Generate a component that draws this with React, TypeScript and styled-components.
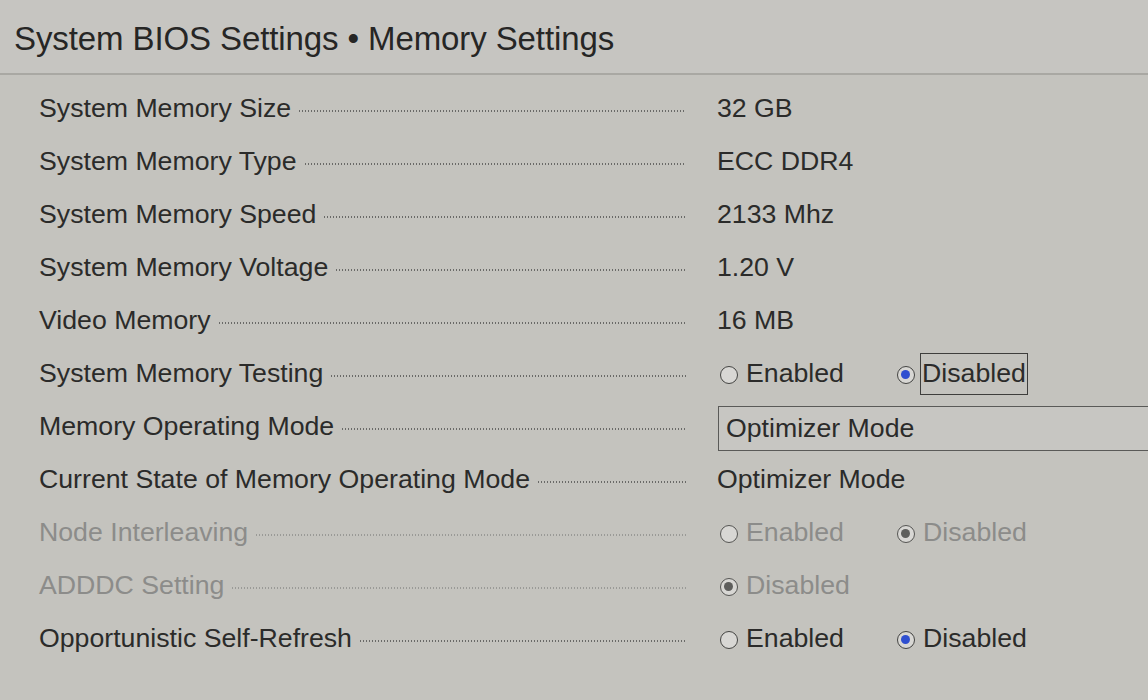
import * as React from 'react'
import styled, { createGlobalStyle, css } from 'styled-components'

type Option = { label: string; checked: boolean; focused?: boolean }

type Setting = {
  name: string
  disabled?: boolean
  text?: string
  select?: string
  options?: Option[]
}

const settings: Setting[] = [
  { name: 'System Memory Size', text: '32 GB' },
  { name: 'System Memory Type', text: 'ECC DDR4' },
  { name: 'System Memory Speed', text: '2133 Mhz' },
  { name: 'System Memory Voltage', text: '1.20 V' },
  { name: 'Video Memory', text: '16 MB' },
  {
    name: 'System Memory Testing',
    options: [
      { label: 'Enabled', checked: false },
      { label: 'Disabled', checked: true, focused: true },
    ],
  },
  { name: 'Memory Operating Mode', select: 'Optimizer Mode' },
  { name: 'Current State of Memory Operating Mode', text: 'Optimizer Mode' },
  {
    name: 'Node Interleaving',
    disabled: true,
    options: [
      { label: 'Enabled', checked: false },
      { label: 'Disabled', checked: true },
    ],
  },
  {
    name: 'ADDDC Setting',
    disabled: true,
    options: [{ label: 'Disabled', checked: true }],
  },
  {
    name: 'Opportunistic Self-Refresh',
    options: [
      { label: 'Enabled', checked: false },
      { label: 'Disabled', checked: true },
    ],
  },
]

const App: React.FC = () => (
  <>
    <GlobalStyle />
    <Screen>
      <Header>
        <Title>System BIOS Settings • Memory Settings</Title>
      </Header>
      <List>
        {settings.map((s) => (
          <Row key={s.name}>
            <LabelCell>
              <Label $disabled={s.disabled}>{s.name}</Label>
              <Leader $disabled={s.disabled} />
            </LabelCell>
            <ValueCell>
              {s.text && <Value>{s.text}</Value>}
              {s.select && <Select>{s.select}</Select>}
              {s.options &&
                s.options.map((o) => (
                  <RadioOption key={o.label}>
                    <RadioCircle $checked={o.checked} $disabled={s.disabled} />
                    <RadioText $disabled={s.disabled} $focused={o.focused}>
                      {o.label}
                    </RadioText>
                  </RadioOption>
                ))}
            </ValueCell>
          </Row>
        ))}
      </List>
    </Screen>
  </>
)

const GlobalStyle = createGlobalStyle`
  html, body {
    margin: 0;
    padding: 0;
    background: #c4c3be;
    overflow: hidden;
  }
  body {
    font-family: "Liberation Sans", Arial, sans-serif;
  }
`

const Screen = styled.div`
  width: 1148px;
  height: 700px;
  background: #c4c3be;
  color: #2b2b2a;
  overflow: hidden;
`

const Header = styled.div`
  height: 73px;
  display: flex;
  align-items: center;
  padding-left: 14px;
  border-bottom: 2px solid #a9a8a3;
  background: #c6c5c1;
`

const Title = styled.div`
  font-size: 33px;
  color: #262625;
  letter-spacing: -0.1px;
  padding-top: 4px;
`

const List = styled.div`
  padding-top: 7px;
  padding-left: 39px;
`

const Row = styled.div`
  display: grid;
  grid-template-columns: 647px 1fr;
  column-gap: 31px;
  height: 53px;
  align-items: center;
  font-size: 26.7px;
`

const LabelCell = styled.div`
  display: flex;
  align-items: center;
  gap: 8px;
`

const Label = styled.span<{ $disabled?: boolean }>`
  white-space: nowrap;
  color: ${(p) => (p.$disabled ? '#8c8c8a' : '#2b2b2a')};
`

const Leader = styled.span<{ $disabled?: boolean }>`
  flex: 1;
  height: 2px;
  margin-top: 4px;
  background-image: repeating-linear-gradient(
    to right,
    ${(p) => (p.$disabled ? '#9a9a97' : '#6a6a68')} 0 1px,
    transparent 1px 3px
  );
`

const ValueCell = styled.div`
  display: flex;
  align-items: center;
  white-space: nowrap;
`

const Value = styled.span`
  color: #2b2b2a;
`

const Select = styled.div`
  box-sizing: border-box;
  width: 470px;
  height: 45px;
  margin-left: 1px;
  margin-top: 4px;
  padding-left: 7px;
  display: flex;
  align-items: center;
  border: 1.5px solid #5a5a58;
  color: #2b2b2a;
  background: #c7c6c2;
`

const RadioOption = styled.div`
  display: flex;
  align-items: center;
  width: 177px;
  padding-left: 3px;
  box-sizing: border-box;
`

const RadioCircle = styled.span<{ $checked: boolean; $disabled?: boolean }>`
  position: relative;
  box-sizing: border-box;
  width: 18px;
  height: 18px;
  border-radius: 50%;
  border: 1.5px solid ${(p) => (p.$disabled ? '#555553' : '#444442')};
  background: #d8d7d4;
  flex-shrink: 0;
  margin-right: 8px;
  margin-top: 3px;

  ${(p) =>
    p.$checked &&
    css`
      &::after {
        content: '';
        position: absolute;
        left: 3px;
        top: 3px;
        width: 9px;
        height: 9px;
        border-radius: 50%;
        background: ${p.$disabled ? '#5e5e5c' : '#2f4fd0'};
      }
    `}
`

const RadioText = styled.span<{ $disabled?: boolean; $focused?: boolean }>`
  color: ${(p) => (p.$disabled ? '#8c8c8a' : '#2b2b2a')};
  ${(p) =>
    p.$focused &&
    css`
      margin-left: -3px;
      padding: 4px 1px 5px 1px;
      border: 1.5px solid #3e3e3c;
    `}
`

export default App
